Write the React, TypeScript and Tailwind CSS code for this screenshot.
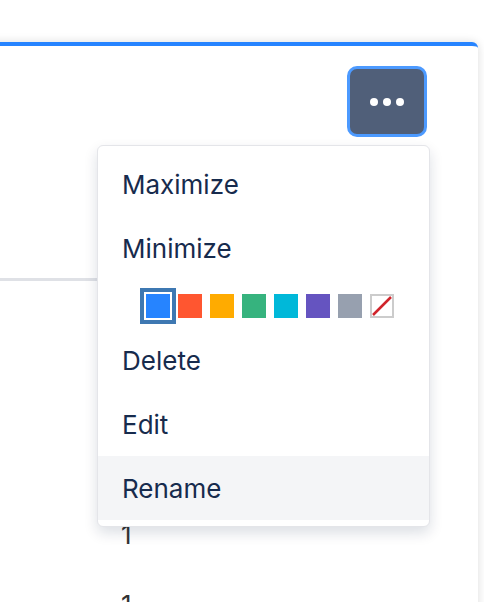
import React from "react";

const swatches = [
  { c: "bg-[#2684FF]", selected: true },
  { c: "bg-[#FF5630]" },
  { c: "bg-[#FFAB00]" },
  { c: "bg-[#36B37E]" },
  { c: "bg-[#00B8D9]" },
  { c: "bg-[#6554C0]" },
  { c: "bg-[#97A0AF]" },
];

function MenuItem({ label, active }: { label: string; active?: boolean }) {
  return (
    <div
      className={
        "h-16 flex items-center px-6 pt-[2px] text-[26px] leading-[36px] text-[#172B4D] " +
        (active ? "bg-[#F4F5F7]" : "")
      }
    >
      {label}
    </div>
  );
}

export default function App() {
  return (
    <div
      className="relative w-[484px] h-[602px] overflow-hidden bg-white"
      style={{ fontFamily: 'Inter, "Noto Sans", sans-serif' }}
    >
      <div className="pt-[42px]">
        <div className="-ml-4 w-[494px] h-[620px] bg-white border-t-4 border-[#2684FF] rounded-tr-[6px] shadow-[0_0_10px_rgba(0,0,0,0.14)]">
          {/* header */}
          <div className="h-[232px] flex justify-end pt-5 pr-[51px]">
            <button className="w-[80px] h-[71px] rounded-[10px] border-[3px] border-[#4C9AFF] bg-[#505F79] flex items-center justify-center gap-[5px]">
              <span className="w-[8px] h-[8px] rounded-full bg-white" />
              <span className="w-[8px] h-[8px] rounded-full bg-white" />
              <span className="w-[8px] h-[8px] rounded-full bg-white" />
            </button>
          </div>
          <div className="ml-4 w-[260px] h-[3px] bg-[#DFE1E6]" />
          {/* content rows */}
          <div className="pt-[236px] pl-[137px] text-[26px] leading-[36px] text-[#333333]">
            {[0, 1].map((i) => (
              <div key={i} className="h-[70px]">
                1
              </div>
            ))}
          </div>
        </div>
      </div>

      {/* dropdown menu */}
      <div className="absolute left-[97px] top-[145px] w-[333px] bg-white border border-[#E4E5E9] rounded-[6px] shadow-[0_6px_14px_rgba(9,30,66,0.14)] py-[6px]">
        <MenuItem label="Maximize" />
        <MenuItem label="Minimize" />
        <div className="h-12 flex items-start pt-[14px] pl-12 gap-2">
          {swatches.map((s, i) => (
            <div
              key={i}
              className={
                "w-6 h-6 " +
                s.c +
                (s.selected ? " ring-4 ring-[#3E78B2] ring-offset-2 ring-offset-white" : "")
              }
            />
          ))}
          <div className="w-6 h-6 border-2 border-[#CCCCCC] bg-white">
            <svg width="20" height="20" viewBox="0 0 20 20">
              <line x1="1" y1="19" x2="19" y2="1" stroke="#D0242B" strokeWidth="2.5" />
            </svg>
          </div>
        </div>
        <MenuItem label="Delete" />
        <MenuItem label="Edit" />
        <MenuItem label="Rename" active />
      </div>
    </div>
  );
}
